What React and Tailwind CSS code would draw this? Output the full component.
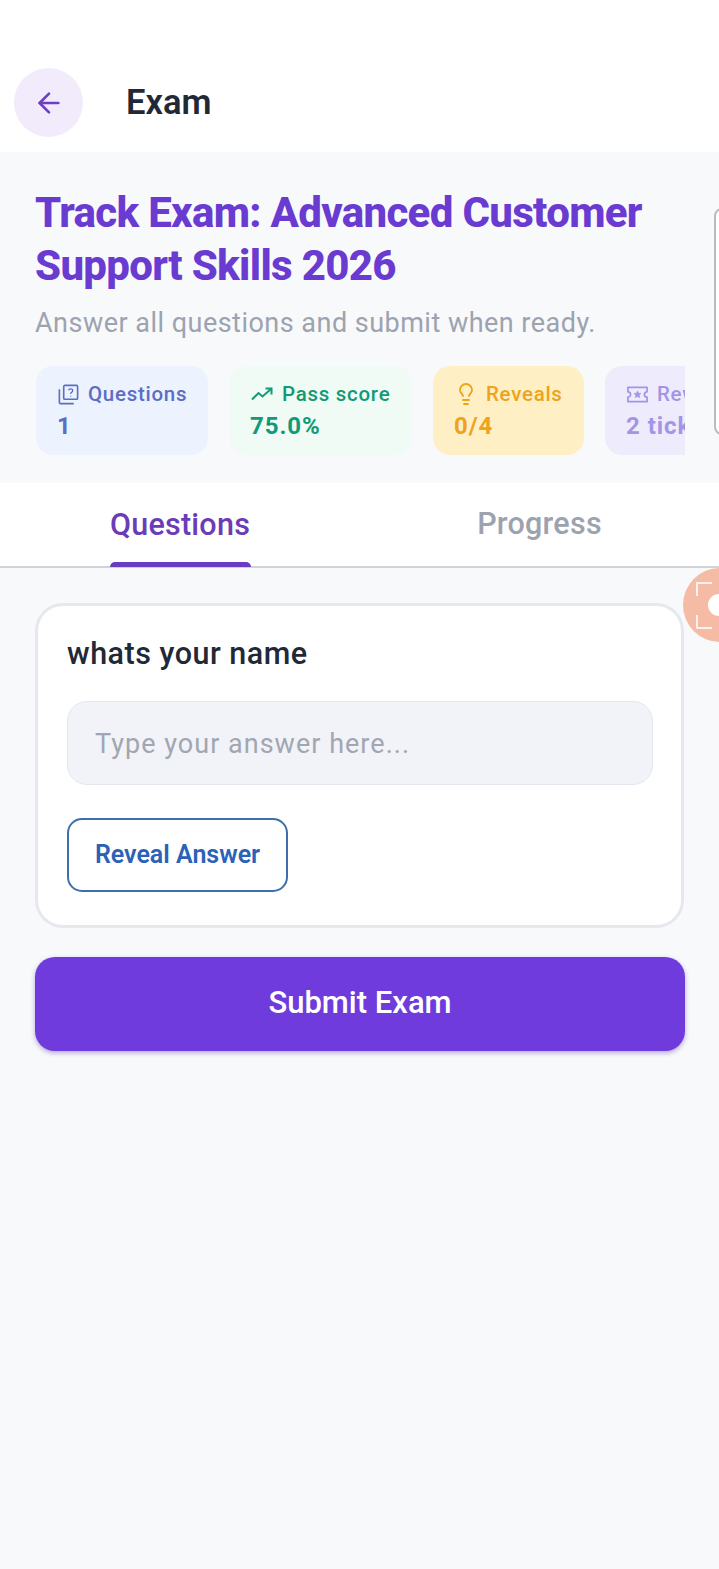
import React from "react";
import { ArrowLeft, Lightbulb } from "lucide-react";

const QuestionsIcon = ({ className }) => (
  <svg viewBox="0 0 24 24" fill="none" stroke="currentColor" strokeWidth="1.7" className={className}>
    <rect x="7" y="2.5" width="14.5" height="14.5" rx="1.2" />
    <path d="M2.5 6.5v14a1 1 0 0 0 1 1h14" />
    <path d="M12 7.6c.3-1 1.1-1.5 2.2-1.5 1.3 0 2.2.8 2.2 1.9 0 1.6-2.2 1.7-2.2 3.4" strokeWidth="1.4" />
    <path d="M14.2 13.2v1" strokeWidth="1.4" />
  </svg>
);

const TrendIcon = ({ className }) => (
  <svg viewBox="0 0 24 24" fill="none" stroke="currentColor" strokeWidth="2" className={className}>
    <path d="M2 17.5l6.5-6.5 4 3.5L21 7" />
    <path d="M15.5 6.5H21.5V12.5" />
  </svg>
);

const TicketStar = ({ className }) => (
  <svg viewBox="0 0 24 24" fill="none" stroke="currentColor" strokeWidth="1.8" strokeLinejoin="round" className={className}>
    <path d="M2 4.5h20v4.7a2.8 2.8 0 0 0 0 5.6v4.7H2v-4.7a2.8 2.8 0 0 0 0-5.6z" />
    <path d="M12 8.2l1.1 2.4 2.6.3-1.9 1.8.5 2.6-2.3-1.3-2.3 1.3.5-2.6-1.9-1.8 2.6-.3z" fill="currentColor" strokeWidth="0.6" />
  </svg>
);

function Chip({ bg, fg, Icon, label, value, w }) {
  return (
    <div className={`${bg} ${fg} ${w} h-[89px] shrink-0 rounded-[17px] pl-[21px] pt-[15px] overflow-hidden`}>
      <div className="flex h-[26px] items-center gap-[8px] whitespace-nowrap text-[20.5px] font-medium tracking-[0.72px]">
        {Icon}
        <span>{label}</span>
      </div>
      <div className="mt-[4px] h-[30px] whitespace-nowrap text-[24px] font-bold leading-[30px] tracking-[0.95px]">{value}</div>
    </div>
  );
}

export default function App() {
  return (
    <div className="relative min-h-[1569px] w-[719px] overflow-hidden bg-[#f8f9fb] font-['Roboto',sans-serif]">
      <header className="flex h-[152px] items-start bg-white pl-[14px] pt-[68px]">
        <button className="flex h-[69px] w-[69px] items-center justify-center rounded-full bg-[#f2ebfb] text-[#6d3fc4]">
          <ArrowLeft size={32} strokeWidth={2} />
        </button>
        <h1 className="ml-[43px] mt-[14px] text-[34.5px] font-semibold leading-[40px] text-[#1f2937]">Exam</h1>
      </header>

      <section className="relative h-[331px] px-[35px] pt-[34px]">
        <h2 className="w-[645px] text-[42px] font-extrabold leading-[53px] tracking-[-0.68px] text-[#6a3bd0]">
          Track Exam: Advanced Customer Support Skills 2026
        </h2>
        <p className="mt-[13px] h-[37px] text-[27px] leading-[37px] tracking-[0.48px] text-[#9ca3af]">
          Answer all questions and submit when ready.
        </p>
        <div className="ml-px mt-[24px] flex w-[649px] gap-[21px] overflow-hidden">
          <Chip bg="bg-[#ecf2fe]" fg="text-[#5b6dc4]" w="w-[172px]" label="Questions" value="1"
            Icon={<QuestionsIcon className="h-[23px] w-[23px] shrink-0" />} />
          <Chip bg="bg-[#f0fbf5]" fg="text-[#119a78]" w="w-[183px]" label="Pass score" value="75.0%"
            Icon={<TrendIcon className="h-[24px] w-[24px] shrink-0" />} />
          <Chip bg="bg-[#ffefc4]" fg="text-[#eea31b]" w="w-[151px]" label="Reveals" value="0/4"
            Icon={<Lightbulb className="h-[24px] w-[24px] shrink-0" strokeWidth={1.8} />} />
          <Chip bg="bg-[#eeebfd]" fg="text-[#a395e6]" w="w-[160px]" label="Rewards" value="2 tickets"
            Icon={<TicketStar className="h-[23px] w-[23px] shrink-0" />} />
        </div>
        <div className="absolute left-[714px] top-[56px] h-[227px] w-[40px] rounded-[8px] border-2 border-[#b9bcc1] bg-white" />
      </section>

      <nav className="flex h-[85px] border-b-2 border-[#cfd2d8] bg-white">
        <div className="flex w-[360px] flex-col items-center justify-end">
          <span className="mb-[15px] text-[30.5px] font-medium leading-[44px] tracking-[0.25px] text-[#6a3cb8]">Questions</span>
          <span className="-mb-px h-[5px] w-[141px] rounded-t-[6px] bg-[#6a3cc4]" />
        </div>
        <div className="flex w-[359px] items-center justify-center pb-[2px]">
          <span className="text-[30.5px] font-medium leading-[44px] tracking-[0.25px] text-[#9ca3af]">Progress</span>
        </div>
      </nav>

      <main className="px-[35px] pt-[35px]">
        <div className="h-[325px] rounded-[28px] border-[3px] border-[#e6e8ed] bg-white pl-[29px] pr-[28px] pt-[28px]">
          <h3 className="text-[30.5px] font-medium leading-[40px] tracking-[0.5px] text-[#1f2937]">whats your name</h3>
          <div className="mt-[27px] flex h-[84px] items-center rounded-[20px] border-[1.5px] border-[#e4e7ee] bg-[#f1f3f8] px-[27px] pt-[2px] text-[27px] tracking-[1.02px] text-[#a1a6b1]">
            Type your answer here...
          </div>
          <button className="mt-[33px] flex h-[74px] w-[221px] items-center justify-center rounded-[15px] border-2 border-[#3f6fa8] bg-white text-[25px] font-semibold text-[#2b62b8]">
            Reveal Answer
          </button>
        </div>
        <button className="mt-[29px] flex h-[94px] w-[650px] items-center justify-center rounded-[20px] bg-[#6f3bdc] pb-[2px] text-[31px] font-medium text-white shadow-[0_2px_5px_rgba(80,40,160,0.4)]">
          Submit Exam
        </button>
      </main>

      <div className="absolute left-[683px] top-[568px] h-[74px] w-[74px] rounded-full bg-[#f5bba5]">
        <div className="absolute left-[25px] top-[26px] h-[22px] w-[22px] rounded-full bg-white" />
        <div className="absolute left-[13px] top-[14px] h-[14px] w-[16px] border-l-2 border-t-2 border-white/80" />
        <div className="absolute left-[13px] top-[47px] h-[14px] w-[16px] border-b-2 border-l-2 border-white/80" />
      </div>
    </div>
  );
}
